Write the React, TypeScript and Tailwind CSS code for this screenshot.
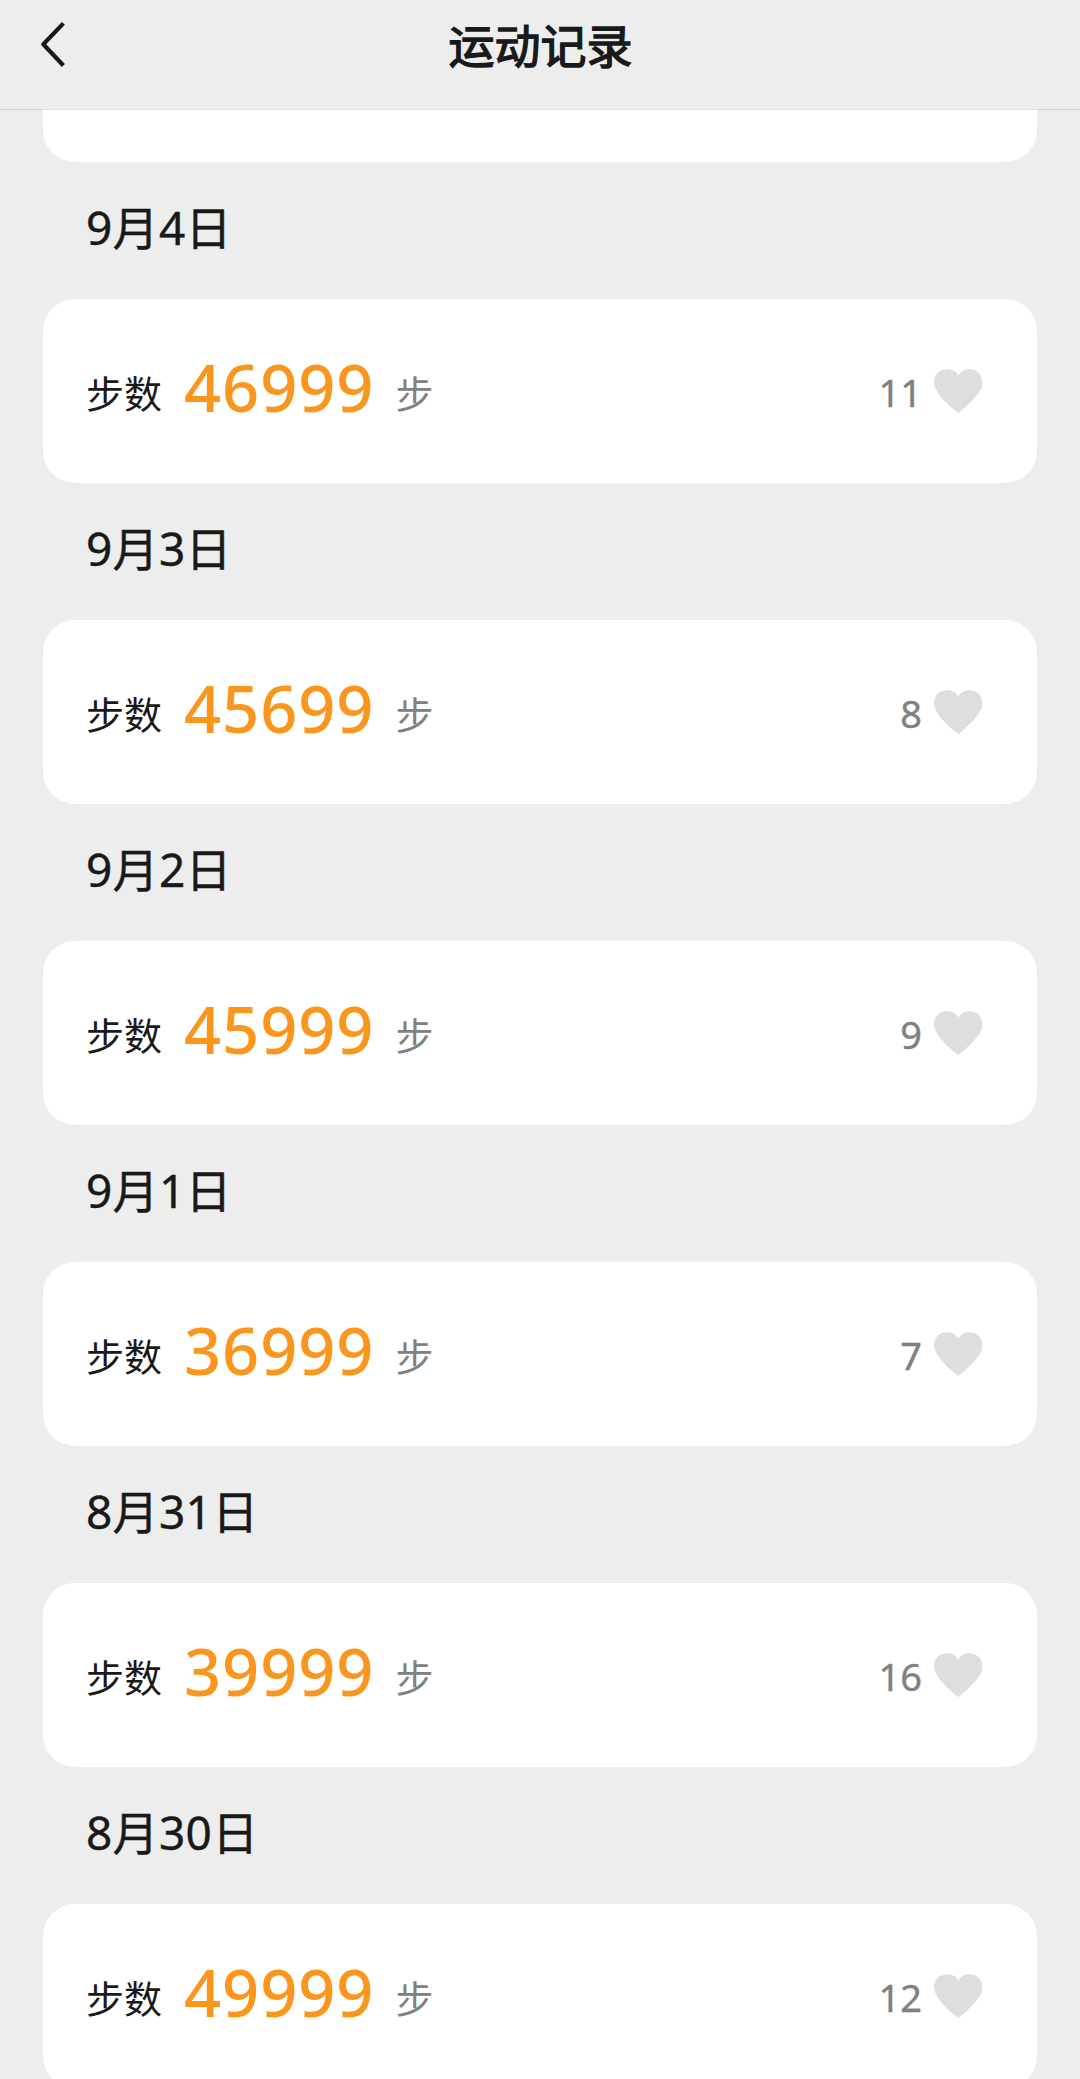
type DayRecord = {
    date: string
    steps: number
    likes: number
}

const records: DayRecord[] = [
    { date: '9月4日', steps: 46999, likes: 11 },
    { date: '9月3日', steps: 45699, likes: 8 },
    { date: '9月2日', steps: 45999, likes: 9 },
    { date: '9月1日', steps: 36999, likes: 7 },
    { date: '8月31日', steps: 39999, likes: 16 },
    { date: '8月30日', steps: 49999, likes: 12 },
]

const Heart = () => (
    <svg viewBox="0 0 48 44" className="w-12 h-11 shrink-0" fill="#dedede">
        <path d="M24.3 44C21 41.5 0 25.500 0 13C0 5.500 5.500.2 13 .2C18.500.2 22.500 2.500 24.300 6.800C26.200 2.500 30 .2 35.500.2C42.500.2 48 5 48 12V17.500C44.500 27.500 29.500 40.200 24.300 44Z" />
    </svg>
)

const Header = () => (
    <header className="relative z-10 -mb-px grid grid-cols-[1fr_auto_1fr] h-[110px] shrink-0 border-b border-black/11">
        <button className="w-[66px] pl-10 pt-[21px] flex items-start" aria-label="返回">
            <svg viewBox="0 0 26 46" className="w-[26px] h-[46px] shrink-0" fill="none" stroke="#191919" strokeWidth="4.2">
                <path d="M23.400 2.400L3.300 23.300L23.400 44.500" strokeLinejoin="round" />
            </svg>
        </button>
        <h1 className="pt-3 pl-px text-[46px] leading-[66px] [-webkit-text-stroke:1.4px_#191919]">运动记录</h1>
        <div />
    </header>
)

const StepCard = ({ record }: { record: DayRecord }) => (
    <section>
        <h2 className="h-[137px] pl-[43px] pt-8 text-[46px] leading-[66px] tracking-[0.3px] [-webkit-text-stroke:0.4px_#191919]">
            {record.date}
        </h2>
        <div className="h-[184px] rounded-[32px] bg-white pl-[43px] pr-[55px] flex justify-between">
            <div className="flex text-[38px]">
                <span className="pt-[66px] leading-[56px]">步数</span>
                <span className="pt-12 ml-[22px] text-[65px] leading-[80px] tracking-[0.9px] font-medium text-[#fa961e]">
                    {record.steps}
                </span>
                <span className="pt-[66px] ml-[21px] leading-[56px] text-[#808080]">步</span>
            </div>
            <div className="flex">
                <span className="pt-[65px] mr-3 text-[38px] leading-[56px] text-[#808080] [-webkit-text-stroke:0.4px_#808080]">
                    {record.likes}
                </span>
                <div className="pt-[70px]">
                    <Heart />
                </div>
            </div>
        </div>
    </section>
)

const App = () => {
    return (
        <div className="h-[2079px] overflow-hidden flex flex-col bg-[#ededed] text-[#191919] font-['Noto_Sans','Noto_Sans_CJK_SC',sans-serif]">
            <Header />
            <main className="flex-1 overflow-hidden px-[43px]">
                {/* tail of the previous day's card, scrolled under the header */}
                <div className="h-[53px] rounded-b-[32px] bg-white" />
                {records.map((record) => (
                    <StepCard key={record.date} record={record} />
                ))}
            </main>
        </div>
    )
}

export default App
